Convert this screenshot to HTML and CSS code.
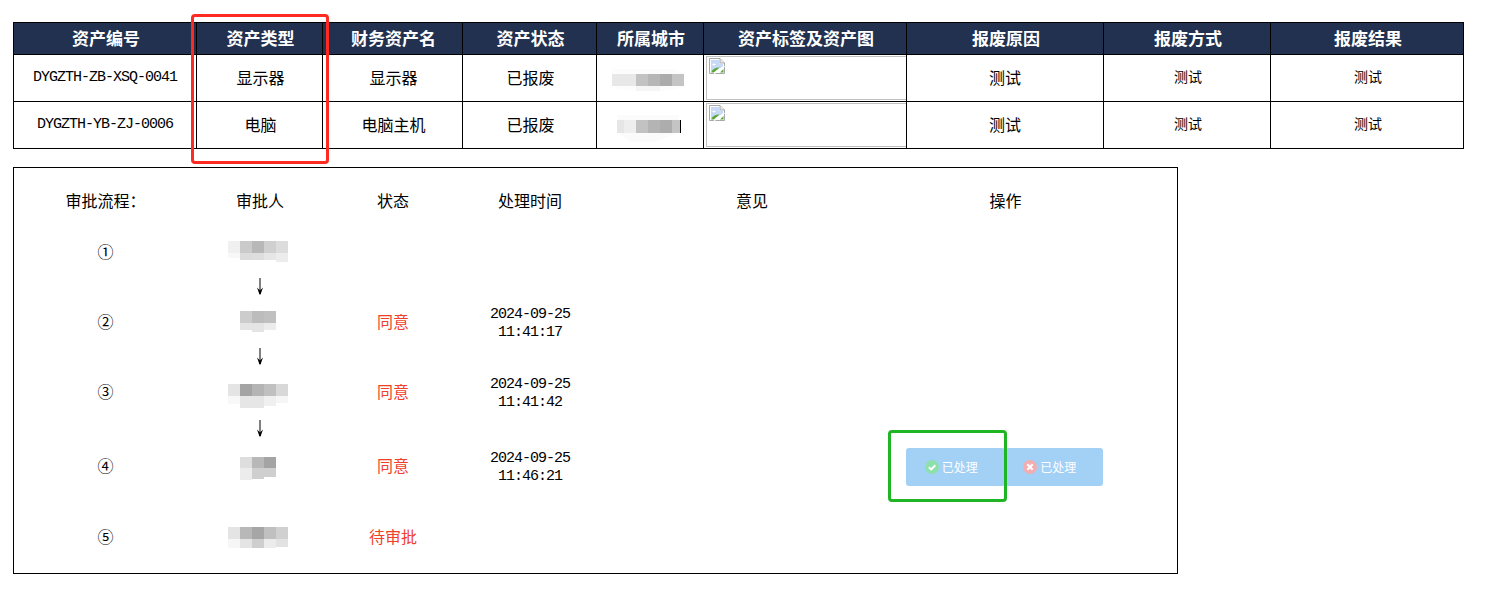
FILE: index.html
```html
<!DOCTYPE html>
<html lang="zh-CN">
<head>
<meta charset="utf-8">
<title>资产报废审批</title>
<link rel="stylesheet" href="styles.css">
</head>
<body>
<svg class="defs" width="0" height="0" aria-hidden="true">
  <symbol id="broken" viewBox="0 0 16 16">
    <path d="M.5.5H11L15.5 5V15.500H.5Z" fill="#fff" stroke="#a9a9a9"/>
    <path d="M11 .5V5H15.500" fill="#e8e8e8" stroke="#a9a9a9"/>
    <path d="M2 2H10.500V5.500H14V9L2 14Z" fill="#c6d9f5"/>
    <path d="M3 6.500Q5 4.500 7 6.500L5 7.500Z" fill="#fff"/>
    <path d="M2 14.500Q4 9.500 10.500 9.500L5 14.500Z" fill="#5aa83a"/>
    <path d="M11 14.500 14.500 11V14.500Z" fill="#5aa83a"/>
    <path d="M5 15.500 15.500 8" stroke="#fff" stroke-width="1.500" fill="none"/>
  </symbol>
  <symbol id="down" viewBox="0 0 7 17">
    <path d="M3.500 0V16" stroke="#000" fill="none"/>
    <path d="M0.500 9.500 3.500 12.500 6.500 9.500 4 16.500H3Z" fill="#000"/>
  </symbol>
</svg>

<table class="grid">
  <colgroup>
    <col class="c1"><col class="c2"><col class="c3"><col class="c4"><col class="c5"><col class="c6"><col class="c7"><col class="c8"><col class="c9">
  </colgroup>
  <thead>
    <tr>
      <th>资产编号</th><th>资产类型</th><th>财务资产名</th><th>资产状态</th><th>所属城市</th><th>资产标签及资产图</th><th>报废原因</th><th>报废方式</th><th>报废结果</th>
    </tr>
  </thead>
  <tbody>
    <tr>
      <td class="mono">DYGZTH-ZB-XSQ-0041</td><td class="nudge">显示器</td><td class="nudge">显示器</td><td class="nudge">已报废</td>
      <td class="city">
        <svg class="mosaic city-a" width="78" height="24" viewBox="0 0 78 24" aria-hidden="true">
          <path d="M6 1H68L78 5V19L60 23H30L10 20Z" fill="#fcfcfc"/>
          <rect x="6" y="6" width="12" height="12" fill="#e8e8e8"/><rect x="18" y="6" width="12" height="12" fill="#e8e8e8"/><rect x="30" y="6" width="12" height="12" fill="#c2c2c2"/><rect x="42" y="6" width="12" height="12" fill="#b6b6b6"/><rect x="54" y="6" width="12" height="12" fill="#ababab"/><rect x="66" y="6" width="12" height="12" fill="#c4c4c4"/>
          <rect x="30" y="18" width="24" height="5" fill="#f5f5f5"/>
        </svg>
      </td>
      <td class="flush"><div class="pic"><svg class="pic-icon" width="16" height="16" aria-hidden="true"><use href="#broken"/></svg></div></td>
      <td>测试</td><td class="small">测试</td><td class="small">测试</td>
    </tr>
    <tr>
      <td class="mono">DYGZTH-YB-ZJ-0006</td><td class="nudge">电脑</td><td class="nudge">电脑主机</td><td class="nudge">已报废</td>
      <td class="city">
        <svg class="mosaic city-b" width="66" height="30" viewBox="0 0 66 30" aria-hidden="true">
          <path d="M2 1H64V18L40 28H16L2 18Z" fill="#fbfbfb"/>
          <rect x="2" y="6" width="7" height="13" fill="#e6e6e6"/><rect x="9" y="6" width="12" height="13" fill="#eeeeee"/><rect x="21" y="6" width="12" height="13" fill="#c2c2c2"/><rect x="33" y="6" width="12" height="13" fill="#b4b4b4"/><rect x="45" y="6" width="12" height="13" fill="#adadad"/><rect x="57" y="6" width="8" height="13" fill="#c4c4c4"/>
          <rect x="65" y="6" width="1" height="13" fill="#000"/>
        </svg>
      </td>
      <td class="flush"><div class="pic"><svg class="pic-icon" width="16" height="16" aria-hidden="true"><use href="#broken"/></svg></div></td>
      <td>测试</td><td class="small">测试</td><td class="small">测试</td>
    </tr>
  </tbody>
</table>

<div class="flow">
  <table class="steps">
    <colgroup>
      <col class="c1"><col class="c2"><col class="c3"><col class="c4"><col class="s5"><col class="c7"><col class="s7">
    </colgroup>
    <thead>
      <tr class="step"><th>审批流程：</th><th>审批人</th><th>状态</th><th>处理时间</th><th>意见</th><th>操作</th><th></th></tr>
    </thead>
    <tbody>
      <tr class="step">
        <td>①</td>
        <td><svg class="mosaic" width="60" height="22" viewBox="0 0 60 22" aria-hidden="true">
          <rect width="12" height="12" fill="#f0f0f0"/><rect x="12" width="12" height="12" fill="#cacaca"/><rect x="24" width="12" height="12" fill="#b8b8b8"/><rect x="36" width="12" height="12" fill="#d0d0d0"/><rect x="48" width="12" height="12" fill="#dcdcdc"/>
          <rect y="12" width="12" height="5" fill="#f8f8f8"/><rect x="12" y="12" width="12" height="7" fill="#dcdcdc"/><rect x="24" y="12" width="12" height="7" fill="#dedede"/><rect x="36" y="12" width="12" height="7" fill="#e6e6e6"/><rect x="48" y="12" width="12" height="9" fill="#ececec"/>
        </svg></td>
        <td></td><td></td><td></td><td></td><td></td>
      </tr>
      <tr class="arrow"><td></td><td><svg class="down" width="7" height="17" aria-hidden="true"><use href="#down"/></svg></td><td></td><td></td><td></td><td></td><td></td></tr>
      <tr class="step">
        <td>②</td>
        <td><svg class="mosaic" width="36" height="22" viewBox="0 0 36 22" aria-hidden="true">
          <rect width="12" height="12" fill="#cccccc"/><rect x="12" width="12" height="12" fill="#bcbcbc"/><rect x="24" width="12" height="12" fill="#c0c0c0"/>
          <rect y="12" width="12" height="7" fill="#e4e4e4"/><rect x="12" y="12" width="12" height="9" fill="#e4e4e4"/><rect x="24" y="12" width="12" height="7" fill="#ececec"/>
        </svg></td>
        <td class="red">同意</td><td class="mono time">2024-09-25<br>11:41:17</td><td></td><td></td><td></td>
      </tr>
      <tr class="arrow"><td></td><td><svg class="down" width="7" height="17" aria-hidden="true"><use href="#down"/></svg></td><td></td><td></td><td></td><td></td><td></td></tr>
      <tr class="step">
        <td>③</td>
        <td><svg class="mosaic low" width="60" height="24" viewBox="0 0 60 24" aria-hidden="true">
          <rect width="12" height="12" fill="#e4e4e4"/><rect x="12" width="12" height="12" fill="#a4a4a4"/><rect x="24" width="12" height="12" fill="#b4b4b4"/><rect x="36" width="12" height="12" fill="#c0c0c0"/><rect x="48" width="12" height="12" fill="#d8d8d8"/>
          <rect y="12" width="12" height="8" fill="#f8f8f8"/><rect x="12" y="12" width="12" height="12" fill="#e6e6e6"/><rect x="24" y="12" width="12" height="12" fill="#e6e6e6"/><rect x="36" y="12" width="12" height="10" fill="#f0f0f0"/><rect x="48" y="12" width="12" height="7" fill="#f6f6f6"/>
        </svg></td>
        <td class="red">同意</td><td class="mono time">2024-09-25<br>11:41:42</td><td></td><td></td><td></td>
      </tr>
      <tr class="arrow tall"><td></td><td><svg class="down" width="7" height="17" aria-hidden="true"><use href="#down"/></svg></td><td></td><td></td><td></td><td></td><td></td></tr>
      <tr class="step">
        <td>④</td>
        <td><svg class="mosaic lower" width="36" height="23" viewBox="0 0 36 23" aria-hidden="true">
          <rect width="12" height="11" fill="#dedede"/><rect x="12" width="12" height="11" fill="#b8b8b8"/><rect x="24" width="12" height="11" fill="#a4a4a4"/>
          <rect y="11" width="12" height="12" fill="#ececec"/><rect x="12" y="11" width="12" height="11" fill="#cfcfcf"/><rect x="24" y="11" width="12" height="9" fill="#cfcfcf"/>
        </svg></td>
        <td class="red">同意</td><td class="mono time">2024-09-25<br>11:46:21</td><td></td>
        <td class="flush">
          <div class="btns">
            <button class="btn" type="button">
              <svg width="14" height="14" viewBox="0 0 14 14" aria-hidden="true"><circle cx="7" cy="7" r="7" fill="#8ce0ab"/><path d="M3.800 7.200 6.200 9.400 10.300 5.200" fill="none" stroke="#fff" stroke-width="2"/></svg><span class="btn-label">已处理</span>
            </button>
            <button class="btn" type="button">
              <svg width="14" height="14" viewBox="0 0 14 14" aria-hidden="true"><circle cx="7" cy="7" r="7" fill="#f3adb0"/><path d="M4.300 4.300 9.700 9.700M9.700 4.300 4.300 9.700" fill="none" stroke="#fff" stroke-width="2"/></svg><span class="btn-label">已处理</span>
            </button>
          </div>
        </td>
        <td></td>
      </tr>
      <tr class="spacer"><td></td><td></td><td></td><td></td><td></td><td></td><td></td></tr>
      <tr class="step">
        <td>⑤</td>
        <td><svg class="mosaic" width="60" height="21" viewBox="0 0 60 21" aria-hidden="true">
          <rect width="12" height="12" fill="#e4e4e4"/><rect x="12" width="12" height="12" fill="#b8b8b8"/><rect x="24" width="12" height="12" fill="#a6a6a6"/><rect x="36" width="12" height="12" fill="#c0c0c0"/><rect x="48" width="12" height="12" fill="#d0d0d0"/>
          <rect y="12" width="12" height="9" fill="#f6f6f6"/><rect x="12" y="12" width="12" height="9" fill="#e4e4e4"/><rect x="24" y="12" width="12" height="9" fill="#cecece"/><rect x="36" y="12" width="12" height="9" fill="#ececec"/><rect x="48" y="12" width="12" height="8" fill="#e2e2e2"/>
        </svg></td>
        <td class="red">待审批</td><td></td><td></td><td></td><td></td>
      </tr>
    </tbody>
  </table>
</div>

<div class="mark mark-red"></div>
<div class="mark mark-green"></div>
</body>
</html>
```

FILE: styles.css
```css
html, body {
  margin: 0;
  padding: 0;
  background: #fff;
}

body {
  padding: 22px 0 0 13px;
  color: #000;
  font-family: "Noto Sans CJK SC", sans-serif;
  font-size: 16px;
}

.defs {
  position: absolute;
}

table {
  border-collapse: collapse;
  table-layout: fixed;
}

.c1 { width: 183px; }
.c2 { width: 126px; }
.c3 { width: 140px; }
.c4 { width: 134px; }
.c5 { width: 107px; }
.c6 { width: 203px; }
.c7 { width: 197px; }
.c8 { width: 167px; }
.c9 { width: 193px; }
.s5 { width: 310px; }
.s7 { width: 75px; }

.grid {
  width: 1451px;
  border: 1px solid #000;
}

.grid th,
.grid td {
  border: 1px solid #000;
  padding: 0 0 2px;
  text-align: center;
}

.grid thead tr {
  height: 32px;
}

.grid tbody tr {
  height: 47px;
}

.grid th {
  padding-left: 2px;
  background: #22314f;
  color: #fff;
  font-size: 17px;
  font-weight: 700;
  line-height: 20px;
}

.grid td {
  line-height: 20px;
}

.grid td.nudge {
  padding-left: 2px;
}

.mono {
  font-family: "Liberation Mono", monospace;
  font-size: 15px;
  letter-spacing: -1px;
}

.grid td.mono {
  padding: 0;
}

.grid td.small {
  padding: 0 0 4px 2px;
  font-size: 14px;
}

.grid td.flush {
  padding: 0;
  text-align: left;
  vertical-align: top;
}

.pic {
  box-sizing: border-box;
  width: 201px;
  height: 44px;
  margin: 1px 0 0 2px;
  border: 1px solid #c0c0c0;
  border-right: 0;
  padding: 1px 0 0 2px;
}

.pic-icon {
  display: block;
}

.mosaic {
  display: inline-block;
  margin-right: 4px;
  vertical-align: middle;
}

.grid td.city {
  padding: 0;
}

.grid .city-a {
  margin: 3px 10px 0 0;
}

.grid .city-b {
  margin: 8px 4px 0 0;
}

.flow {
  box-sizing: border-box;
  width: 1165px;
  height: 407px;
  margin-top: 18px;
  border: 1px solid #000;
  padding-top: 8px;
}

.steps {
  width: 1163px;
  margin-left: -1px;
}

.steps th,
.steps td {
  padding: 0 0 0 2px;
  text-align: center;
  font-weight: 400;
  line-height: 20px;
}

.steps th {
  padding-bottom: 2px;
}

.steps td.flush {
  padding: 0;
}

.step {
  height: 50px;
}

.arrow {
  height: 20px;
}

.arrow.tall {
  height: 24px;
}

.spacer {
  height: 21px;
}

.down {
  display: block;
  margin: 0 auto;
  transform: translateX(-0.5px);
}

.red {
  color: #f0402a;
}

.steps td.time {
  padding-top: 6px;
  line-height: 18px;
}

.low {
  margin-top: 10px;
}

.lower {
  margin-top: 6px;
}

.btns {
  display: flex;
  margin-top: 4px;
}

.btn {
  display: flex;
  flex: 1 1 0;
  align-items: center;
  justify-content: center;
  gap: 3px;
  height: 38px;
  border: 0;
  border-radius: 3px;
  padding: 0 8px 0 0;
  background: #a3d0f5;
  color: #fff;
  font-family: "Noto Sans CJK SC", sans-serif;
  font-size: 12px;
}

.btn-label {
  margin-top: -2px;
}

.mark {
  position: absolute;
  box-sizing: border-box;
  border-radius: 4px;
}

.mark-red {
  left: 191px;
  top: 14px;
  width: 138px;
  height: 150px;
  border: 3px solid #ff2a22;
}

.mark-green {
  left: 888px;
  top: 430px;
  width: 119px;
  height: 72px;
  border: 3px solid #1fb524;
}
```
